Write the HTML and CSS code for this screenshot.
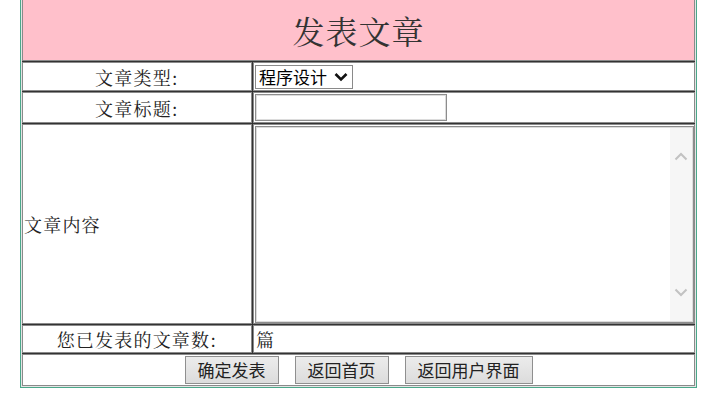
FILE: index.html
```html
<!DOCTYPE html>
<html lang="zh-CN">
<head>
<meta charset="utf-8">
<title>发表文章</title>
<link rel="stylesheet" href="styles.css">
</head>
<body>
<table class="form-table">
  <tr>
    <td class="head" colspan="2">发表文章</td>
  </tr>
  <tr class="row-type">
    <td class="label">文章类型:</td>
    <td class="field">
      <div class="select-wrap">
        <select class="select">
          <option>程序设计</option>
        </select>
        <svg class="select-arrow" width="14" height="10" viewBox="0 0 14 10"><path d="M1.5 2 L7 7.5 L12.5 2" fill="none" stroke="#111" stroke-width="2.6"/></svg>
      </div>
    </td>
  </tr>
  <tr class="row-title">
    <td class="label">文章标题:</td>
    <td class="field"><input class="text-input" type="text"></td>
  </tr>
  <tr class="row-content">
    <td class="label label-left">文章内容</td>
    <td class="field">
      <div class="area">
        <textarea class="area-text"></textarea>
        <div class="area-bar">
          <svg width="14" height="9" viewBox="0 0 14 9"><path d="M1.5 7.5 L7 2 L12.5 7.5" fill="none" stroke="#c2c2c2" stroke-width="2"/></svg>
          <svg width="14" height="9" viewBox="0 0 14 9"><path d="M1.5 1.5 L7 7 L12.5 1.5" fill="none" stroke="#c2c2c2" stroke-width="2"/></svg>
        </div>
      </div>
    </td>
  </tr>
  <tr class="row-count">
    <td class="label">您已发表的文章数:</td>
    <td class="field field-text">篇</td>
  </tr>
  <tr class="row-buttons">
    <td colspan="2" class="buttons-cell">
      <div class="buttons">
        <button class="btn" type="button">确定发表</button>
        <button class="btn" type="button">返回首页</button>
        <button class="btn" type="button">返回用户界面</button>
      </div>
    </td>
  </tr>
</table>
</body>
</html>
```

FILE: styles.css
```css
html, body {
  margin: 0;
  padding: 0;
  background: #ffffff;
}

body {
  font-family: "Noto Serif CJK SC", "Liberation Serif", "Noto Sans CJK SC", serif;
  color: #222;
}

.form-table {
  margin: -2px 0 0 20px;
  width: 677px;
  border-collapse: separate;
  border-spacing: 1px;
  background: #333333;
  border: 1px solid #4aa88a;
  border-top: 0;
  box-shadow: inset 0 0 0 1px #e4e4e4;
}

.form-table td {
  background: #ffffff;
  border: 1px solid #8a8a8a;
  padding: 0;
}

.form-table .head {
  background: #ffc0cb;
  height: 61px;
  text-align: center;
  font-size: 32px;
  color: #333;
  letter-spacing: 1px;
  border-top: 0;
}

.label {
  width: 227px;
  text-align: center;
  font-size: 18px;
  letter-spacing: 1.2px;
}

.label-left {
  text-align: left;
  padding-left: 1px !important;
}

.row-type td { height: 27px; }
.row-title td { height: 29px; }
.row-content td { height: 198px; }
.row-count td { height: 26px; }
.row-buttons td { height: 30px; }

.field {
  vertical-align: middle;
}

.field-text {
  font-size: 18px;
  padding-left: 2px !important;
}

.select-wrap {
  position: relative;
  width: 98px;
  height: 24px;
  margin-left: 1px;
}

.select {
  display: block;
  appearance: none;
  -webkit-appearance: none;
  box-sizing: border-box;
  width: 98px;
  height: 24px;
  font-family: "Noto Sans CJK SC", "Liberation Sans", sans-serif;
  font-size: 17px;
  line-height: 22px;
  color: #000;
  background: #fff;
  border: 1px solid #8a8a8a;
  border-radius: 0;
  padding: 0 0 0 3px;
}

.select-arrow {
  position: absolute;
  right: 5px;
  top: 7px;
  pointer-events: none;
}

.text-input {
  display: block;
  margin-left: 1px;
  box-sizing: border-box;
  width: 192px;
  height: 27px;
  border: 1px solid #8d8d8d;
  box-shadow: inset 0 0 0 1px #dcdcdc;
  padding: 2px 4px;
  font-size: 16px;
}

.area {
  display: flex;
  margin-left: 1px;
  height: 197px;
  border: 1px solid #8d8d8d;
  box-shadow: inset 0 0 0 1px #dcdcdc;
  padding: 1px;
  box-sizing: border-box;
}

.area-text {
  flex: 1;
  border: 0;
  margin: 0;
  padding: 2px;
  resize: none;
  outline: none;
  background: #fff;
  font-size: 16px;
}

.area-bar {
  width: 22px;
  background: #f6f6f6;
  display: flex;
  flex-direction: column;
  justify-content: space-between;
  align-items: center;
  padding: 24px 0 24px;
}

.buttons-cell {
  vertical-align: middle;
}

.buttons {
  display: flex;
  justify-content: center;
  gap: 16px;
}

.btn {
  height: 28px;
  padding: 0 12px;
  font-family: "Noto Sans CJK SC", "Liberation Sans", sans-serif;
  font-size: 17px;
  color: #222;
  background: linear-gradient(#ececec, #dcdcdc);
  border: 1px solid #8f8f8f;
  border-radius: 0;
  line-height: 26px;
}
```
